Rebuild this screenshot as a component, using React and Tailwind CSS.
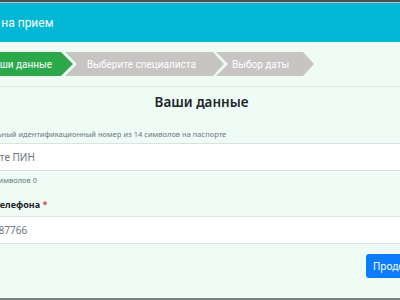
import React from 'react';

const arrowFirst = { clipPath: 'polygon(0 0, calc(100% - 12px) 0, 100% 50%, calc(100% - 12px) 100%, 0 100%)' };
const arrowMid = { clipPath: 'polygon(0 0, calc(100% - 11px) 0, 100% 50%, calc(100% - 11px) 100%, 0 100%, 12px 50%)' };

function Step({ label, active, first, className }) {
  return (
    <div
      style={first ? arrowFirst : arrowMid}
      className={`h-[24px] flex items-center text-[10px] text-white shrink-0 ${active ? 'bg-[#2ba84a]' : 'bg-[#c9c4c4]'} ${className}`}
    >
      {label}
    </div>
  );
}

export default function App() {
  return (
    <div className="w-[400px] h-[300px] overflow-hidden bg-[#effcf6] flex flex-col font-['Noto_Sans',sans-serif]">
      <div className="h-[2px] bg-[#4b5157] shrink-0" />
      <div className="h-px bg-[#b7bfc3] shrink-0" />

      <div className="ml-[-56px] w-[520px] flex-1 flex flex-col">
        {/* Header */}
        <div className="h-[39px] bg-[#02b8d6] flex items-center pl-[14px] text-white text-[12px] font-['Roboto',sans-serif]">
          Запись на прием
        </div>

        {/* Steps */}
        <div className="pt-[10px] pb-[10px] pl-[12px] border-b border-[#dfe9e6] flex font-['Roboto',sans-serif]">
          <Step label="Ваши данные" active first className="w-[117px] pl-[32px]" />
          <Step label="Выберите специалиста" className="w-[159px] pl-[22px] ml-[-8px]" />
          <Step label="Выбор даты" className="w-[98px] pl-[16px] ml-[-8px]" />
        </div>

        {/* Body */}
        <div className="pt-[3px] flex-1 flex flex-col">
          <div className="pl-[18px] pr-[23px]">
            <h2 className="text-center text-[13.5px] leading-[24px] font-semibold text-[#212529]">Ваши данные</h2>
          </div>

          <div className="pl-[18px] flex flex-col">
            <p className="mt-[12px] text-[7.5px] leading-[16px] text-[#6c757d]">
              Персональный идентификационный номер из 14 символов на паспорте
            </p>
            <div className="mt-px h-[28px] bg-white border-y border-[#dbe2e4] flex items-center pl-[8px] text-[10px] text-[#6c757d]">
              Введите ПИН
            </div>
            <p className="mt-[2px] text-[7.5px] leading-[14px] text-[#6c757d]">Введено символов 0</p>

            <p className="mt-[10px] text-[9px] leading-[16px] font-bold text-[#212529]">
              Номер телефона <span className="text-[#dc3545]">*</span>
            </p>
            <div className="mt-[3px] h-[28px] bg-white border-y border-[#dbe2e4] flex items-center pl-[8px] text-[10px] text-[#6c757d]">
              0555387766
            </div>
          </div>

          <div className="mt-[10px] pr-[23px] flex justify-end">
            <button className="h-[24px] px-[7px] rounded-[3px] bg-[#0b7dfb] text-white text-[10px]">
              Продолжить
            </button>
          </div>
        </div>
      </div>

      <div className="h-[2px] bg-[#7d8083] shrink-0" />
    </div>
  );
}
